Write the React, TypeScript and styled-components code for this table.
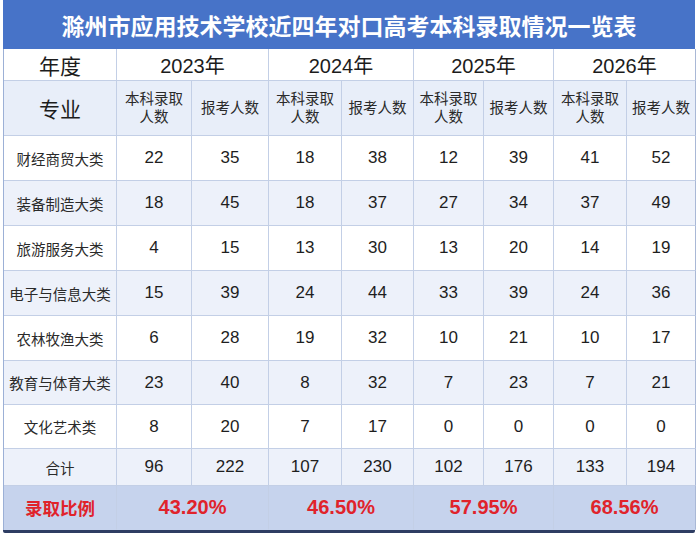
import React from "react";
import styled, { createGlobalStyle } from "styled-components";

const Global = createGlobalStyle`
  html, body { margin: 0; padding: 0; background: #ffffff; }
  body { font-family: "Liberation Sans", "Noto Sans CJK SC", sans-serif; }
`;

const Page = styled.div`
  padding: 0 5px 0 3px;
  width: 692px;
`;

const Card = styled.div`
  border-bottom: 3px solid #2e3d63;
  border-radius: 0 0 2px 2px;
`;

const Title = styled.div`
  height: 49px;
  background: #4773c8;
  color: #ffffff;
  font-family: "Noto Sans CJK SC", sans-serif;
  font-weight: 700;
  font-size: 23px;
  display: flex;
  align-items: center;
  justify-content: center;
`;

const Grid = styled.div`
  display: grid;
  grid-template-columns: 113px 75px 77px 73px 72px 70px 70px 73px 69px;
  grid-template-rows: 32px 55px 45px 45px 45px 45px 45px 44px 44px 37px 44px;
  border-left: 1px solid #9cb0d6;
  box-sizing: border-box;
`;

type Tone = "white" | "light" | "head" | "rate";
const bg: Record<Tone, string> = {
  white: "#ffffff",
  light: "#edf1fa",
  head: "#e8eef9",
  rate: "#c6d3ed",
};

const Cell = styled.div<{ $tone: Tone; $span?: number; $last?: boolean }>`
  grid-column: span ${(p) => p.$span ?? 1};
  background: ${(p) => bg[p.$tone]};
  border-right: 1px solid ${(p) => (p.$last ? "#a9b8d6" : "#c3cfe6")};
  border-bottom: 1px solid ${(p) => (p.$tone === "rate" ? "#c6d3ed" : "#c3cfe6")};
  display: flex;
  flex-direction: column;
  align-items: center;
  justify-content: center;
  text-align: center;
  color: #1e1e1e;
  box-sizing: border-box;
  overflow: hidden;
`;

const YearText = styled.span`
  font-size: 20px;
  color: #1c1c1c;
`;

const BigLabel = styled.span`
  font-family: "Noto Sans CJK SC", sans-serif;
  font-size: 21px;
  color: #1c1c1c;
`;

const SubHead = styled.span`
  display: block;
  font-family: "Liberation Sans", "Noto Sans CJK SC", sans-serif;
  font-size: 14.5px;
  line-height: 18px;
  height: 18px;
  color: #2a2a2a;
`;

const Category = styled.span`
  font-family: "Noto Sans CJK SC", sans-serif;
  font-size: 14.5px;
  color: #2a2a2a;
`;

const Num = styled.span`
  font-size: 17px;
  color: #1e1e1e;
`;

const RateLabel = styled.span`
  font-family: "Noto Sans CJK SC", sans-serif;
  font-weight: 700;
  font-size: 17.5px;
  color: #e0232b;
`;

const RateValue = styled.span`
  font-weight: 700;
  font-size: 20px;
  color: #e0232b;
`;

const years = ["2023年", "2024年", "2025年", "2026年"];

const rows: { name: string; vals: number[] }[] = [
  { name: "财经商贸大类", vals: [22, 35, 18, 38, 12, 39, 41, 52] },
  { name: "装备制造大类", vals: [18, 45, 18, 37, 27, 34, 37, 49] },
  { name: "旅游服务大类", vals: [4, 15, 13, 30, 13, 20, 14, 19] },
  { name: "电子与信息大类", vals: [15, 39, 24, 44, 33, 39, 24, 36] },
  { name: "农林牧渔大类", vals: [6, 28, 19, 32, 10, 21, 10, 17] },
  { name: "教育与体育大类", vals: [23, 40, 8, 32, 7, 23, 7, 21] },
  { name: "文化艺术类", vals: [8, 20, 7, 17, 0, 0, 0, 0] },
];

const totals = [96, 222, 107, 230, 102, 176, 133, 194];
const rates = ["43.20%", "46.50%", "57.95%", "68.56%"];

export default function App() {
  return (
    <>
      <Global />
      <Page>
        <Card>
          <Title>滁州市应用技术学校近四年对口高考本科录取情况一览表</Title>
          <Grid>
            <Cell $tone="white">
              <BigLabel>年度</BigLabel>
            </Cell>
            {years.map((y, i) => (
              <Cell key={y} $tone="white" $span={2} $last={i === 3}>
                <YearText>{y}</YearText>
              </Cell>
            ))}

            <Cell $tone="head">
              <BigLabel>专业</BigLabel>
            </Cell>
            {years.map((y, i) => (
              <React.Fragment key={"h" + y}>
                <Cell $tone="head">
                  <SubHead>本科录取</SubHead>
                  <SubHead>人数</SubHead>
                </Cell>
                <Cell $tone="head" $last={i === 3}>
                  <SubHead>报考人数</SubHead>
                </Cell>
              </React.Fragment>
            ))}

            {rows.map((r, ri) => {
              const tone: Tone = ri % 2 === 0 ? "white" : "light";
              return (
                <React.Fragment key={r.name}>
                  <Cell $tone={tone}>
                    <Category>{r.name}</Category>
                  </Cell>
                  {r.vals.map((v, vi) => (
                    <Cell key={vi} $tone={tone} $last={vi === 7}>
                      <Num>{v}</Num>
                    </Cell>
                  ))}
                </React.Fragment>
              );
            })}

            <Cell $tone="light">
              <Category>合计</Category>
            </Cell>
            {totals.map((v, vi) => (
              <Cell key={"t" + vi} $tone="light" $last={vi === 7}>
                <Num>{v}</Num>
              </Cell>
            ))}

            <Cell $tone="rate">
              <RateLabel>录取比例</RateLabel>
            </Cell>
            {rates.map((r, i) => (
              <Cell key={r} $tone="rate" $span={2} $last={i === 3}>
                <RateValue>{r}</RateValue>
              </Cell>
            ))}
          </Grid>
        </Card>
      </Page>
    </>
  );
}
